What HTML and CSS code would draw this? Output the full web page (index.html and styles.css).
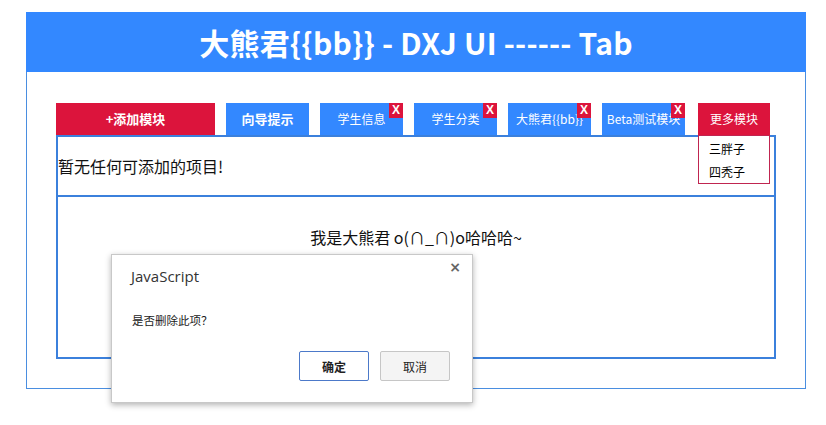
FILE: index.html
```html
<!DOCTYPE html>
<html lang="zh">
<head>
<meta charset="utf-8">
<title>DXJ UI Tab</title>
<link rel="stylesheet" href="styles.css">
</head>
<body>
<div class="wrap">
  <div class="header">大熊君{{bb}} - DXJ UI ------ Tab</div>
  <div class="main">
    <div class="tabs">
      <div class="tab add">+添加模块</div>
      <div class="tab guide">向导提示</div>
      <div class="tab">学生信息<span class="x">X</span></div>
      <div class="tab">学生分类<span class="x">X</span></div>
      <div class="tab clip">大熊君{{bb}}<span class="x">X</span></div>
      <div class="tab clip">Beta测试模块<span class="x">X</span></div>
      <div class="more">
        <div class="tab more-btn">更多模块</div>
        <ul class="menu">
          <li>三胖子</li>
          <li>四秃子</li>
        </ul>
      </div>
    </div>
    <div class="panel">
      <div class="sec empty">暂无任何可添加的项目!</div>
      <div class="sec body">我是大熊君 o(∩_∩)o哈哈哈~</div>
    </div>
  </div>
</div>
<div class="dialog">
  <div class="dlg-title">JavaScript</div>
  <div class="dlg-close">×</div>
  <div class="dlg-msg">是否删除此项？</div>
  <div class="dlg-btns">
    <button class="btn ok">确定</button>
    <button class="btn cancel">取消</button>
  </div>
</div>
</body>
</html>
```

FILE: styles.css
```css
html, body {
  margin: 0;
  padding: 0;
  background: #fff;
  font-family: "Noto Sans CJK SC", "Noto Sans", sans-serif;
}
.wrap {
  margin: 12px 0 0 26px;
  width: 778px;
  height: 376px;
  border: 1px solid #4a8ee0;
  border-top: none;
}
.header {
  height: 60px;
  margin: 0 -1px;
  background: #3388ff;
  color: #fff;
  font-weight: bold;
  font-size: 30px;
  line-height: 60px;
  text-align: center;
  letter-spacing: 0.2px;
}
.main {
  padding: 31px 29px 0 29px;
}
.tabs {
  display: flex;
  gap: 11px;
  height: 32px;
  position: relative;
}
.tab {
  position: relative;
  width: 83px;
  height: 32px;
  background: #3388ff;
  color: #fff;
  font-size: 12px;
  line-height: 32px;
  text-align: center;
  white-space: nowrap;
}
.tab.clip {
  overflow: hidden;
}
.tab.add {
  width: 159px;
  background: #dc143c;
  font-weight: bold;
  font-size: 13px;
}
.tab.guide {
  font-weight: bold;
  font-size: 13px;
}
.x {
  position: absolute;
  top: 0;
  right: 0;
  width: 14px;
  height: 15px;
  background: #dc143c;
  color: #fff;
  font-family: "Liberation Sans", sans-serif;
  font-weight: bold;
  font-size: 12px;
  line-height: 14px;
  text-align: center;
}
.more {
  position: relative;
  margin-left: 2px;
}
.more-btn {
  width: 72px;
  background: #dc143c;
}
.menu {
  position: absolute;
  left: 0;
  top: 32px;
  z-index: 2;
  width: 70px;
  margin: 0;
  padding: 1px 0 0 0;
  list-style: none;
  background: #fff;
  border: 1px solid #c02550;
  height: 46px;
}
.menu li {
  padding-left: 10px;
  font-size: 12px;
  line-height: 23px;
  color: #000;
}
.panel {
  width: 716px;
  border: 2px solid #3b80dc;
}
.sec {
  font-size: 16px;
  color: #111;
}
.empty {
  height: 58px;
  line-height: 58px;
  border-bottom: 2px solid #3b80dc;
}
.body {
  height: 160px;
  padding-top: 28px;
  box-sizing: border-box;
  line-height: 24px;
  text-align: center;
  font-size: 16px;
}
.dialog {
  position: absolute;
  left: 111px;
  top: 254px;
  width: 360px;
  height: 147px;
  background: #fff;
  border: 1px solid #c8c8c8;
  box-shadow: 0 2px 6px rgba(0, 0, 0, 0.3);
  font-family: "Noto Sans CJK SC", sans-serif;
}
.dlg-title {
  position: absolute;
  left: 19px;
  top: 11px;
  font-family: "Open Sans", "Noto Sans", sans-serif;
  font-size: 15px;
  color: #333;
}
.dlg-close {
  position: absolute;
  right: 11px;
  top: 4px;
  font-family: "DejaVu Sans", sans-serif;
  font-size: 14px;
  font-weight: bold;
  color: #666;
}
.dlg-msg {
  position: absolute;
  left: 20px;
  top: 57px;
  font-size: 11.5px;
  color: #222;
}
.dlg-btns {
  position: absolute;
  right: 22px;
  bottom: 21px;
  display: flex;
  gap: 11px;
}
.btn {
  width: 70px;
  height: 30px;
  padding: 0;
  font-family: "Noto Sans CJK SC", sans-serif;
  font-size: 12px;
  color: #222;
  border-radius: 2px;
}
.btn.ok {
  background: #fff;
  border: 1px solid #4c79c9;
  font-weight: bold;
}
.btn.cancel {
  background: #f4f4f4;
  border: 1px solid #c6c6c6;
}
```
